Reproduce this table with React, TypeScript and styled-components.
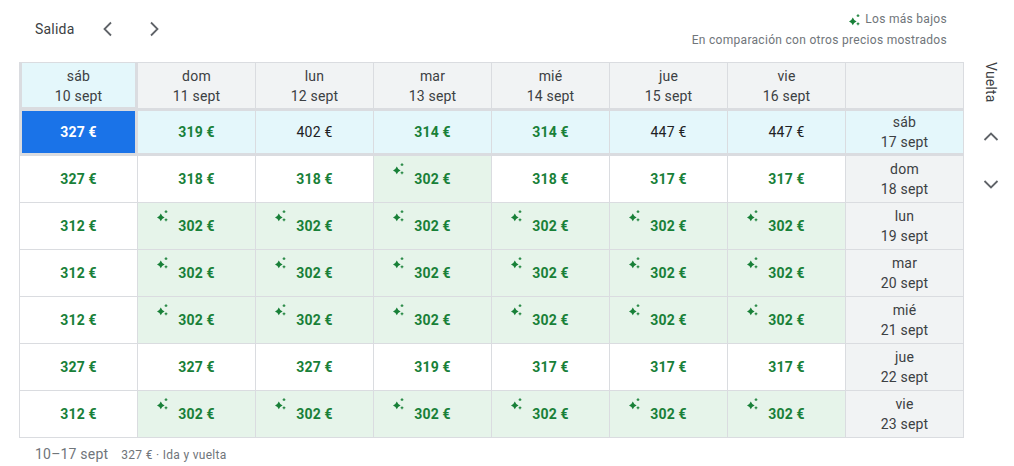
import React from "react";
import styled, { createGlobalStyle, css } from "styled-components";

const GlobalStyle = createGlobalStyle`
  html, body { margin: 0; padding: 0; background: #ffffff; }
  body { font-family: Roboto, "Noto Sans", Arial, sans-serif; color: #3c4043; }
  * { box-sizing: border-box; }
`;

const LINE = "#dadce0";

const Page = styled.div`
  width: 1014px;
  height: 466px;
  padding-left: 19px;
  overflow: hidden;
`;

const TopBar = styled.div`
  width: 945px;
  height: 62px;
  display: flex;
  justify-content: space-between;
  align-items: flex-start;
`;

const Nav = styled.div`
  margin-top: 9px;
  height: 40px;
  display: flex;
  align-items: center;
  padding-left: 16px;
`;

const NavLabel = styled.span`
  font-size: 14px;
  letter-spacing: 0.2px;
  color: #3c4043;
  margin-right: 13px;
`;

const IconButton = styled.button`
  width: 40px;
  height: 40px;
  border: none;
  background: transparent;
  padding: 0;
  margin-right: 8px;
  display: flex;
  align-items: center;
  justify-content: center;
  color: #5f6368;
  cursor: pointer;
`;

const Legend = styled.div`
  padding-top: 9px;
  padding-right: 17px;
  display: flex;
  flex-direction: column;
  align-items: flex-end;
  font-size: 12px;
  letter-spacing: 0.3px;
  line-height: 21px;
  color: #70757a;
`;

const LegendTitle = styled.div`
  display: flex;
  align-items: center;
  gap: 5px;
`;

const Main = styled.div`
  display: flex;
  align-items: flex-start;
`;

const Grid = styled.div`
  display: grid;
  grid-template-columns: repeat(8, 117px);
  grid-template-rows: 45px repeat(7, 46px);
  gap: 1px;
  padding: 1px;
  background: ${LINE};
  width: 945px;
`;

type Tone = "white" | "cyan" | "green" | "gray" | "blue";

const toneBg: Record<Tone, string> = {
  white: "#ffffff",
  cyan: "#e4f7fb",
  green: "#e6f4ea",
  gray: "#f1f3f4",
  blue: "#1a73e8",
};

const Cell = styled.div<{ $tone: Tone; $thickRow?: boolean; $thickCol?: boolean; $headSel?: boolean }>`
  position: relative;
  background: ${(p) => toneBg[p.$tone]};
  display: flex;
  flex-direction: column;
  align-items: center;
  justify-content: center;
  ${(p) => {
    const s: string[] = [];
    if (p.$thickRow) {
      s.push(`inset 0 2px 0 ${LINE}`, `inset 0 -2px 0 ${LINE}`);
    }
    if (p.$thickCol) {
      s.push(`inset 2px 0 0 ${LINE}`, `inset -2px 0 0 ${LINE}`);
    }
    if (p.$headSel) {
      s.push(`inset 0 -1px 0 ${LINE}`);
    }
    return s.length ? css`box-shadow: ${s.join(", ")};` : "";
  }}
`;

const DateText = styled.span`
  font-size: 14px;
  letter-spacing: 0.2px;
  line-height: 20px;
  color: #3c4043;
  text-align: center;
`;

type PriceKind = "green" | "dark" | "selected";

const Price = styled.span<{ $kind: PriceKind }>`
  font-size: 14px;
  letter-spacing: 0.2px;
  line-height: 20px;
  font-weight: ${(p) => (p.$kind === "dark" ? 400 : 700)};
  color: ${(p) => (p.$kind === "green" ? "#188038" : p.$kind === "dark" ? "#202124" : "#ffffff")};
`;

const SparkBadge = styled.span`
  position: absolute;
  left: 19px;
  top: 7px;
  display: flex;
`;

const Side = styled.div`
  width: 50px;
  display: flex;
  flex-direction: column;
  align-items: center;
  padding-left: 3px;
`;

const SideLabel = styled.div`
  height: 51px;
  writing-mode: vertical-rl;
  font-size: 14px;
  letter-spacing: 0.2px;
  color: #3c4043;
  line-height: 20px;
`;

const SideButton = styled.button`
  width: 40px;
  height: 47px;
  border: none;
  background: transparent;
  padding: 0;
  display: flex;
  align-items: center;
  justify-content: center;
  color: #5f6368;
  cursor: pointer;
`;

const Footer = styled.div`
  padding: 6px 0 0 16px;
  display: flex;
  align-items: baseline;
  gap: 13px;
  color: #70757a;
`;

const FooterDates = styled.span`
  font-size: 14px;
  letter-spacing: 0.2px;
  line-height: 20px;
`;

const FooterPrice = styled.span`
  font-size: 12px;
  letter-spacing: 0.3px;
  line-height: 20px;
`;

const Spark = () => (
  <svg width="11" height="12" viewBox="0 0 11 12">
    <path
      d="M3.8 3.6 Q4.6 6.2 7.6 7.4 Q4.6 8.6 3.8 11.2 Q3 8.6 0 7.4 Q3 6.2 3.8 3.6Z"
      fill="#188038"
    />
    <path
      d="M9 0.3 V3.1 M7.6 1.7 H10.4 M9 8.4 V11.2 M7.6 9.8 H10.4"
      stroke="#188038"
      strokeWidth="1.1"
      fill="none"
    />
  </svg>
);

const Chevron = ({ dir }: { dir: "left" | "right" | "up" | "down" }) => {
  const pts: Record<string, string> = {
    left: "16,5.5 9.5,12 16,18.5",
    right: "8,5.5 14.5,12 8,18.5",
    up: "5.5,15 12,8.5 18.5,15",
    down: "5.5,9 12,15.5 18.5,9",
  };
  return (
    <svg width="24" height="24" viewBox="0 0 24 24" fill="none" stroke="currentColor" strokeWidth="1.8">
      <polyline points={pts[dir]} />
    </svg>
  );
};

const outbound = [
  ["sáb", "10 sept"],
  ["dom", "11 sept"],
  ["lun", "12 sept"],
  ["mar", "13 sept"],
  ["mié", "14 sept"],
  ["jue", "15 sept"],
  ["vie", "16 sept"],
];

type P = { v: number; k: "g" | "d" | "s" | "l" };

const low: P[] = Array.from({ length: 6 }, () => ({ v: 302, k: "l" as const }));

const rows: { day: string; date: string; prices: P[] }[] = [
  {
    day: "sáb",
    date: "17 sept",
    prices: [
      { v: 327, k: "s" },
      { v: 319, k: "g" },
      { v: 402, k: "d" },
      { v: 314, k: "g" },
      { v: 314, k: "g" },
      { v: 447, k: "d" },
      { v: 447, k: "d" },
    ],
  },
  {
    day: "dom",
    date: "18 sept",
    prices: [
      { v: 327, k: "g" },
      { v: 318, k: "g" },
      { v: 318, k: "g" },
      { v: 302, k: "l" },
      { v: 318, k: "g" },
      { v: 317, k: "g" },
      { v: 317, k: "g" },
    ],
  },
  { day: "lun", date: "19 sept", prices: [{ v: 312, k: "g" }, ...low] },
  { day: "mar", date: "20 sept", prices: [{ v: 312, k: "g" }, ...low] },
  { day: "mié", date: "21 sept", prices: [{ v: 312, k: "g" }, ...low] },
  {
    day: "jue",
    date: "22 sept",
    prices: [
      { v: 327, k: "g" },
      { v: 327, k: "g" },
      { v: 327, k: "g" },
      { v: 319, k: "g" },
      { v: 317, k: "g" },
      { v: 317, k: "g" },
      { v: 317, k: "g" },
    ],
  },
  { day: "vie", date: "23 sept", prices: [{ v: 312, k: "g" }, ...low] },
];

export default function App() {
  return (
    <>
      <GlobalStyle />
      <Page>
        <TopBar>
          <Nav>
            <NavLabel>Salida</NavLabel>
            <IconButton aria-label="Anterior">
              <Chevron dir="left" />
            </IconButton>
            <IconButton aria-label="Siguiente">
              <Chevron dir="right" />
            </IconButton>
          </Nav>
          <Legend>
            <LegendTitle>
              <Spark />
              <span>Los más bajos</span>
            </LegendTitle>
            <div>En comparación con otros precios mostrados</div>
          </Legend>
        </TopBar>
        <Main>
          <Grid>
            {outbound.map(([d, dt], i) => (
              <Cell key={"h" + i} $tone={i === 0 ? "cyan" : "gray"} $thickCol={i === 0} $headSel={i === 0}>
                <DateText>{d}</DateText>
                <DateText>{dt}</DateText>
              </Cell>
            ))}
            <Cell $tone="gray" />
            {rows.map((r, ri) => (
              <React.Fragment key={"r" + ri}>
                {r.prices.map((p, ci) => {
                  const tone: Tone =
                    p.k === "s" ? "blue" : ri === 0 ? "cyan" : p.k === "l" ? "green" : "white";
                  const kind: PriceKind = p.k === "s" ? "selected" : p.k === "d" ? "dark" : "green";
                  return (
                    <Cell key={ci} $tone={tone} $thickRow={ri === 0} $thickCol={ri === 0 && ci === 0}>
                      {p.k === "l" && (
                        <SparkBadge>
                          <Spark />
                        </SparkBadge>
                      )}
                      <Price $kind={kind}>{p.v} €</Price>
                    </Cell>
                  );
                })}
                <Cell $tone={ri === 0 ? "cyan" : "gray"} $thickRow={ri === 0}>
                  <DateText>{r.day}</DateText>
                  <DateText>{r.date}</DateText>
                </Cell>
              </React.Fragment>
            ))}
          </Grid>
          <Side>
            <SideLabel>Vuelta</SideLabel>
            <SideButton aria-label="Anterior vuelta">
              <Chevron dir="up" />
            </SideButton>
            <SideButton aria-label="Siguiente vuelta">
              <Chevron dir="down" />
            </SideButton>
          </Side>
        </Main>
        <Footer>
          <FooterDates>10–17 sept</FooterDates>
          <FooterPrice>327 € · Ida y vuelta</FooterPrice>
        </Footer>
      </Page>
    </>
  );
}
